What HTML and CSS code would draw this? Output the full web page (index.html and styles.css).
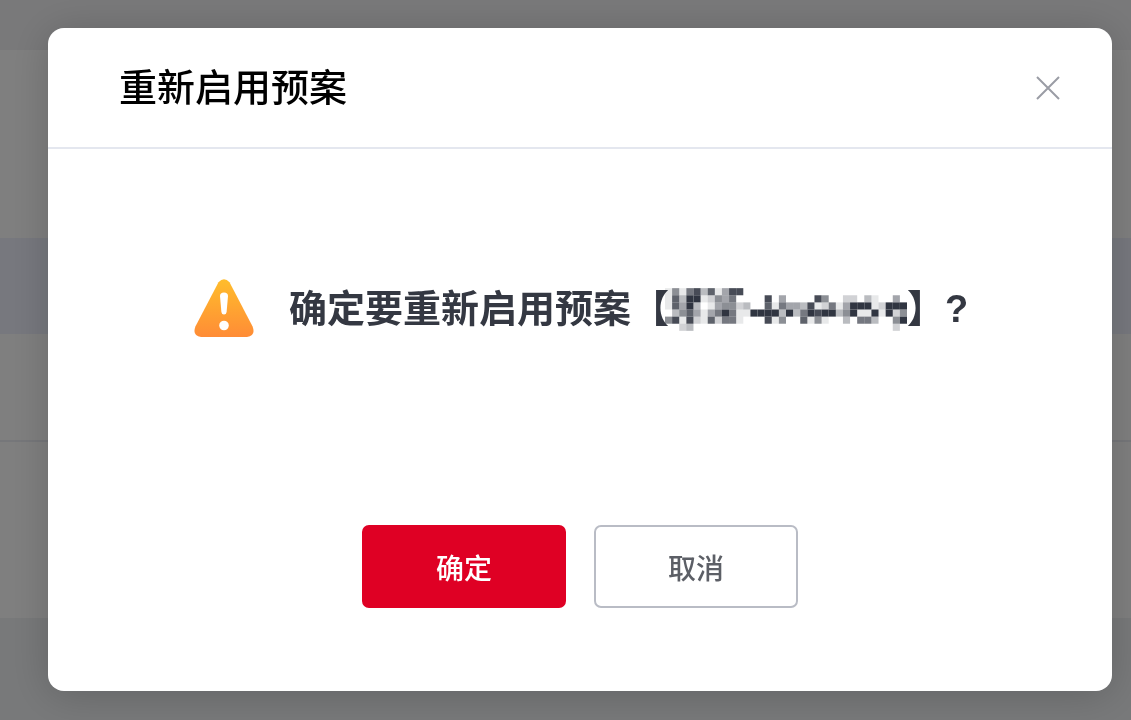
FILE: index.html
```
<!DOCTYPE html>
<html lang="zh-CN">
<head>
    <meta charset="UTF-8">
    <meta name="viewport" content="width=device-width, initial-scale=1.0">
    <title>重新启用预案</title>
    <link rel="stylesheet" href="styles.css">
</head>
<body>
    <div class="page">
        <div class="page-top"></div>
        <div class="page-filter"></div>
        <div class="table-head"></div>
        <div class="table-row"></div>
        <div class="table-last"></div>
        <div class="page-bottom"></div>
    </div>

    <div class="overlay">
        <div class="dialog" role="dialog" aria-modal="true" aria-labelledby="dialogTitle">
            <div class="dialog-header">
                <h1 id="dialogTitle">重新启用预案</h1>
                <button class="close-button" type="button" aria-label="关闭">
                    <svg width="26" height="26" viewBox="0 0 26 26">
                        <path d="M2 2L24 24M24 2L2 24" fill="none" stroke="#9a9ca5" stroke-width="2"/>
                    </svg>
                </button>
            </div>

            <div class="dialog-body">
                <svg class="warning-icon" width="60" height="58" viewBox="0 0 60 58" aria-hidden="true">
                    <defs>
                        <linearGradient id="warningFill" x1="0" y1="0" x2="0" y2="1">
                            <stop offset="0" stop-color="#ffbd2c"/>
                            <stop offset="1" stop-color="#ff8c36"/>
                        </linearGradient>
                    </defs>
                    <path d="M24.5 3.2Q30 -2.8 35.5 3.2L58.6 47.5Q62 57 53 58H7Q-2 57 1.4 47.5Z" fill="url(#warningFill)"/>
                    <path d="M26 17Q26 13.5 30 13.5T34 17L32.6 33Q32.3 35.5 30 35.5T27.4 33Z" fill="#fff"/>
                    <circle cx="30" cy="46.5" r="4.8" fill="#fff"/>
                </svg>
                <p class="message">
                    <span>确定要重新启用预案【</span>
                    <svg id="maskedName" class="masked-name" viewBox="0 0 34 6" role="img" aria-label="预案名称"></svg>
                    <span>】?</span>
                </p>
            </div>

            <div class="dialog-footer">
                <button class="button button-primary" type="button">确定</button>
                <button class="button" type="button">取消</button>
            </div>
        </div>
    </div>

    <script src="script.js"></script>
</body>
</html>
```
FILE: styles.css
```
/* CSS styles */
* {
    box-sizing: border-box;
}

body {
    margin: 0;
    font-family: 'Liberation Sans', 'Noto Sans CJK SC', sans-serif;
    color: #343842;
}

/* Page behind the dialog */
.page {
    display: flex;
    flex-direction: column;
    min-height: 100vh;
    background-color: #fff;
}

.page-top {
    height: 50px;
    background-color: #f2f2f5;
}

.page-filter {
    height: 188px;
}

.table-head {
    height: 96px;
    background-color: #eef1fc;
}

.table-row {
    height: 108px;
    border-bottom: 2px solid #eceef4;
}

.table-last {
    height: 176px;
}

.page-bottom {
    flex: 1;
    background-color: #f0f2f5;
}

.overlay {
    position: fixed;
    inset: 0;
    display: flex;
    padding: 28px 19px 29px 48px;
    background-color: rgba(0, 0, 0, 0.5);
}

.dialog {
    flex: 1;
    display: flex;
    flex-direction: column;
    background-color: #fff;
    border-radius: 16px;
    box-shadow: 0 4px 40px rgba(0, 0, 0, 0.18);
}

.dialog-header {
    display: flex;
    align-items: center;
    justify-content: space-between;
    height: 121px;
    padding: 0 51px 0 71px;
    border-bottom: 2px solid #e4e7ef;
}

h1 {
    margin: 0;
    font-size: 38px;
    font-weight: 500;
    line-height: 56px;
    color: #000;
}

button {
    padding: 0;
    font-family: inherit;
    cursor: pointer;
}

.close-button {
    display: flex;
    border: none;
    background: none;
}

.dialog-body {
    flex: 1;
    display: flex;
    align-items: center;
    gap: 35px;
    padding: 0 71px 58px 146px;
}

.warning-icon {
    flex: none;
}

.message {
    display: flex;
    align-items: center;
    margin: 0;
    padding-top: 2px;
    font-size: 38px;
    font-weight: 700;
    line-height: 56px;
    white-space: nowrap;
}

.masked-name {
    flex: none;
    width: 242px;
    height: 43px;
    margin-left: -4px;
}

.dialog-footer {
    display: flex;
    justify-content: center;
    gap: 28px;
    padding-bottom: 83px;
}

.button {
    width: 204px;
    height: 83px;
    border: 2px solid #b9bcc5;
    border-radius: 7px;
    background-color: #fff;
    color: #5c5f66;
    font-size: 28px;
    font-weight: 500;
}

.button-primary {
    border-color: #df0024;
    background-color: #df0024;
    color: #fff;
}
```
FILE: script.js
```
// Pixelated plan name, one digit per block: 0 is clear, 9 is darkest
const rows = [
    '1516837148800000000000000000000000',
    '1739912546000080400008500220310040',
    '1749301455230071644381261499912999',
    '0357414696119999393698993591191925',
    '5818217266100081500715100306630059',
    '0023000000000000000000000000000020'
];
const masked = document.getElementById('maskedName');

rows.forEach((row, y) => {
    [...row].forEach((level, x) => {
        if (level === '0') return;
        const block = document.createElementNS('http://www.w3.org/2000/svg', 'rect');
        block.setAttribute('x', x);
        block.setAttribute('y', y);
        block.setAttribute('width', 1);
        block.setAttribute('height', 1);
        block.setAttribute('fill', '#303541');
        block.setAttribute('fill-opacity', level / 9);
        masked.appendChild(block);
    });
});
```
